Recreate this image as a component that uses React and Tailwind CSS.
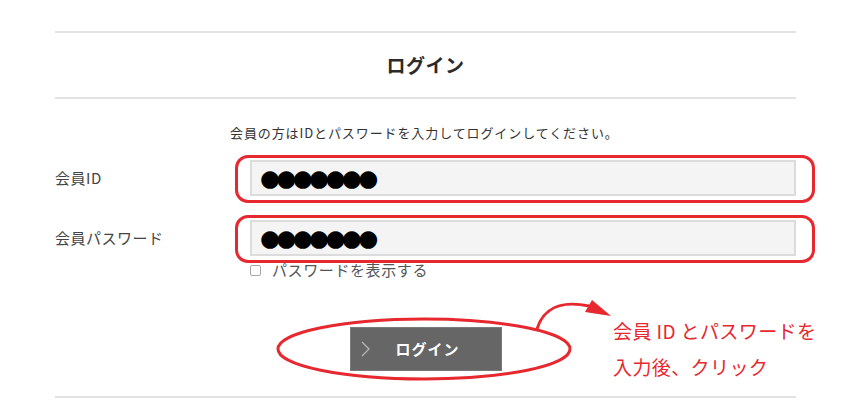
export default function App() {
  const font = { fontFamily: '"Noto Sans CJK JP", "Noto Sans", sans-serif' };
  const dots = { fontFamily: '"DejaVu Sans", sans-serif' };

  return (
    <div className="relative h-[420px] w-[868px] overflow-hidden bg-white text-[#333]" style={font}>
      <div className="ml-[55px] w-[741px] pt-[31px]">
        <div className="h-[2px] bg-[#e3e3e3]" />
        <h1 className="flex h-[64px] items-center justify-center text-[19px] font-bold tracking-[0.5px] text-[#2b2b2b]">
          ログイン
        </h1>
        <div className="h-[2px] bg-[#e3e3e3]" />

        <p className="mt-[24px] pl-[175px] text-[13px] leading-[20px] tracking-[0.9px] text-[#333]">
          会員の方はIDとパスワードを入力してログインしてください。
        </p>

        <div className="mt-[17px] flex items-center">
          <label className="w-[195px] text-[15px] tracking-[0.5px] text-[#444]">会員ID</label>
          <div className="relative flex-1">
            <div className="flex h-[36px] items-center border-2 border-[#dcdcdc] bg-[#f4f4f4] pl-[8px]">
              <span className="text-[23px] leading-none tracking-[-3.7px] text-black" style={dots}>
                ●●●●●●●
              </span>
            </div>
            <div className="pointer-events-none absolute -top-[5px] -right-[19px] -bottom-[7px] -left-[15px] rounded-[13px] border-[3px] border-[#e7282f]" />
          </div>
        </div>

        <div className="mt-[24px] flex items-center">
          <label className="w-[195px] text-[15px] tracking-[0.5px] text-[#444]">会員パスワード</label>
          <div className="relative flex-1">
            <div className="flex h-[36px] items-center border-2 border-[#dcdcdc] bg-[#f4f4f4] pl-[8px]">
              <span className="text-[23px] leading-none tracking-[-3.7px] text-black" style={dots}>
                ●●●●●●●
              </span>
            </div>
            <div className="pointer-events-none absolute -top-[5px] -right-[19px] -bottom-[7px] -left-[15px] rounded-[13px] border-[3px] border-[#e7282f]" />
          </div>
        </div>

        <div className="mt-[4px] flex h-[20px] items-center pl-[195px]">
          <input type="checkbox" className="h-[11px] w-[11px] appearance-none rounded-[2px] border border-[#a8a8a8] bg-white" />
          <span className="ml-[11px] text-[15px] tracking-[0.6px] text-[#555]">パスワードを表示する</span>
        </div>

        <button className="mx-auto mt-[47px] flex h-[44px] w-[152px] items-center border border-[#7a7a7a] bg-[#666]">
          <svg width="12" height="18" viewBox="0 0 12 18" className="ml-[9px]">
            <path d="M2 2 L9 9 L2 16" fill="none" stroke="#b5b5b5" strokeWidth="1.3" />
          </svg>
          <span className="ml-[24px] text-[15px] font-bold tracking-[1px] text-white">ログイン</span>
        </button>

        <div className="mt-[25px] h-[2px] bg-[#e3e3e3]" />
      </div>

      <svg className="pointer-events-none absolute left-[276px] top-[317px]" width="296" height="64" viewBox="0 0 296 64">
        <ellipse cx="148" cy="32" rx="146" ry="30" fill="none" stroke="#e7282f" strokeWidth="3" />
      </svg>

      <svg className="pointer-events-none absolute left-[530px] top-[295px]" width="90" height="40" viewBox="0 0 90 40">
        <path d="M7 34 C 13 14, 30 5, 59 11" fill="none" stroke="#e7282f" strokeWidth="3" strokeLinecap="round" />
        <path d="M62 5 L81 21 L55 17 Z" fill="#e7282f" />
      </svg>

      <div className="absolute left-[613px] top-[313px] text-[19px] leading-[36px] tracking-[0.4px] text-[#e7282f]">
        <div>会員 ID とパスワードを</div>
        <div>入力後、クリック</div>
      </div>
    </div>
  );
}
